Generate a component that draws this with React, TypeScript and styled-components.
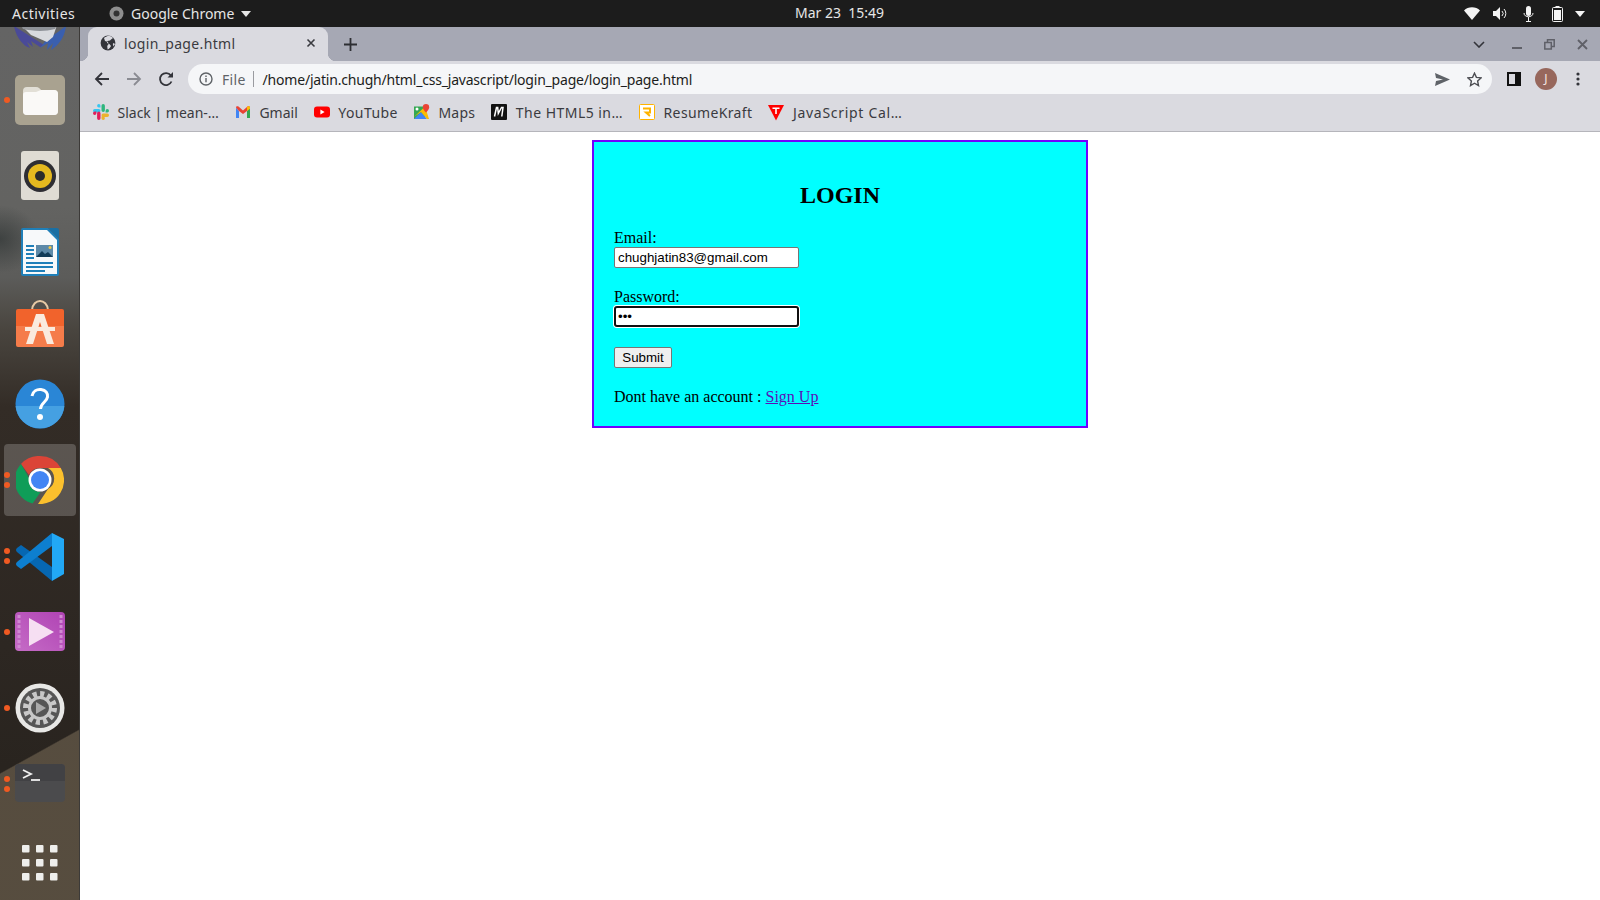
import React from 'react';
import styled, { createGlobalStyle } from 'styled-components';

const Global = createGlobalStyle`
  html, body { margin: 0; padding: 0; width: 1600px; height: 900px; overflow: hidden; background: #fff; }
  * { box-sizing: border-box; }
`;
const UI = `"Noto Sans", "Open Sans", sans-serif`;

const Screen = styled.div`display:flex;flex-direction:column;width:1600px;height:900px;overflow:hidden;`;
const TopBar = styled.header`height:27px;flex:none;background:#1c1c1c;color:#e6e6e6;font-family:${UI};font-size:14px;display:grid;grid-template-columns:783px auto 1fr;align-items:center;padding:0 12px;`;
const TopLeft = styled.div`display:flex;align-items:center;`;
const Activities = styled.span`width:97px;letter-spacing:.5px;`;
const AppMenu = styled.span`display:flex;align-items:center;gap:7px;`;
const Clock = styled.time`font-size:14px;padding-bottom:2px;`;
const TopRight = styled.div`display:flex;align-items:center;justify-content:flex-end;padding-right:3px;`;
const Tray = styled.span<{ $gap: number }>`display:flex;margin-left:${p => p.$gap}px;`;
const Body = styled.div`flex:1;display:flex;min-height:0;`;
const Dock = styled.nav`
  width:80px;flex:none;overflow:hidden;display:flex;flex-direction:column;align-items:center;
  border-right:1px solid #3c3a38;
  background:
    linear-gradient(151deg, transparent 0 66.200%, rgba(88,78,64,.97) 66.500% 100%) 0 410px/80px 463px no-repeat,
    radial-gradient(40px 34px at 0 212px, rgba(40,46,46,.6), transparent),
    linear-gradient(180deg,#646464 0,#636361 180px,#5c5c5a 250px,#4a4640 300px,#332c26 380px,#2d2722 620px,#29241f 740px,#29241f 873px);
`;
const DockItem = styled.div<{ $active?: boolean }>`
  position:relative;flex:none;width:72px;height:72px;margin:2px 0;border-radius:4px;
  display:flex;align-items:center;justify-content:center;
  background:${p => (p.$active ? 'rgba(255,255,255,.2)' : 'transparent')};
  &:first-child{margin-top:-39px;}
  &:last-child{margin-top:5px;}
`;
const Pips = styled.span`position:absolute;left:0;top:50%;transform:translateY(-50%);display:flex;flex-direction:column;gap:4px;`;
const Pip = styled.i`display:block;width:6px;height:6px;border-radius:50%;background:#f05a22;`;

const Main = styled.main`flex:1;min-width:0;display:flex;flex-direction:column;`;
const TabStrip = styled.div`height:34px;flex:none;background:#a6a8b4;display:flex;align-items:stretch;padding-left:8px;`;
const Tab = styled.div`
  position:relative;width:240px;background:#dadae0;border-radius:9px 9px 0 0;display:flex;align-items:center;
  font-family:${UI};font-size:14px;letter-spacing:.34px;color:#3a3b40;padding:0 12px 2px 12px;gap:8px;
  &::before,&::after{content:"";position:absolute;bottom:0;width:8px;height:8px;}
  &::before{left:-8px;background:radial-gradient(circle at 0 0,transparent 8px,#dadae0 8.500px);}
  &::after{right:-8px;background:radial-gradient(circle at 100% 0,transparent 8px,#dadae0 8.500px);}
`;
const TabTitle = styled.span`flex:1;`;
const NewTab = styled.div`width:44px;display:flex;align-items:center;justify-content:center;`;
const StripRight = styled.div`margin-left:auto;display:flex;align-items:center;padding-right:2px;`;
const WinBtn = styled.div<{ $w: number }>`width:${p => p.$w}px;display:flex;align-items:center;justify-content:center;`;
const ToolBar = styled.div`height:36px;flex:none;background:#dadae0;display:flex;align-items:center;padding:0 6px 0 6px;`;
const ToolBtn = styled.div`width:32px;height:32px;flex:none;display:flex;align-items:center;justify-content:center;`;
const Omni = styled.div`flex:1;height:30px;margin:0 6px 0 6px;border-radius:15px;background:#f5f6f8;display:flex;align-items:center;padding:0 2px 0 11px;font-family:${UI};font-size:14px;color:#1c1d20;`;
const Scheme = styled.span`color:#5f6368;margin-left:9px;letter-spacing:.3px;`;
const Divider = styled.span`width:1px;height:16px;background:#9a9ba0;margin:0 9px 0 7px;`;
const Url = styled.span`flex:1;white-space:nowrap;letter-spacing:-.2px;`;
const Bookmarks = styled.div`height:35px;flex:none;background:#dadae0;border-bottom:1px solid #b5b5bb;display:flex;align-items:center;padding:0 0 4px 13px;gap:16px;font-family:${UI};font-size:14px;color:#3a3b40;`;
const Bookmark = styled.span<{ $track: number }>`display:flex;align-items:center;gap:8.500px;white-space:nowrap;letter-spacing:${p => p.$track}px;`;
const Page = styled.div`flex:1;background:#fff;padding-top:8px;font-family:"Liberation Serif",serif;font-size:16px;color:#000;`;
const Card = styled.form`width:496px;margin:0 auto;padding:20px;background:#0ff;border:2px solid #7000ff;`;
const Title = styled.h2`font-size:24px;font-weight:700;text-align:center;margin:20px 0;`;
const Field = styled.label`display:block;margin-bottom:20px;`;
const FieldName = styled.span`display:block;line-height:18px;`;
const Input = styled.input<{ $focus?: boolean }>`
  display:block;width:185px;height:21px;margin:0;padding:1px 3px;font:13.33px "Liberation Sans",sans-serif;color:#000;background:#fff;
  border:1px solid #767676;border-radius:2px;
  ${p => (p.$focus ? 'border:0;outline:none;box-shadow:0 0 0 1px #fff, inset 0 0 0 2px #101010;padding:1px 4px;border-radius:3px;' : '')}
`;
const Submit = styled.button`display:block;height:21px;width:58px;padding:0;font:13.33px "Liberation Sans",sans-serif;color:#000;background:#efefef;border:1px solid #767676;border-radius:2px;`;
const Footnote = styled.p`margin:20px 0 0;line-height:18px;`;
const SignUp = styled.a`color:#5a10b8;text-decoration:underline;`;

const Globe = () => (
  <svg width="16" height="16" viewBox="0 0 16 16"><circle cx="8" cy="8" r="7.400" fill="#33343a" /><path d="M8 .8c-1 1-3 1-4 2.200l1 3 3 1 .6 2-1.400 2 .4 3.600C9 14 10 13 11 11l-1.600-2-2.400-1 .4-2 2.600-.4L11 4.400 13 3C11.500 1.500 10 1 8 .8zM13.500 8l1.500 1-1.500 2.500L12.800 9z" fill="#dadae0" /></svg>
);
const Thunderbird = () => (
  <svg width="54" height="54" viewBox="0 0 54 54">
    <path d="M1 29c2 11 9 20 16 22l-3-6 6 5-2-6 9 6 4-2z" fill="#4a4a98" />
    <path d="M53 29c-1 11-8 20-15 24l2-7-6 7 1-7-8 5 6-8 12-8z" fill="#3a5fae" />
    <path d="M8 28c10 2 26 2 36 0l-4 12-6 5-16-7z" fill="#d8dade" />
    <path d="M8 28c10 2 26 2 36 0l-2 4c-10 3-24 2-32 0z" fill="#8e9298" />
  </svg>
);
const FilesIcon = () => (
  <svg width="50" height="50" viewBox="0 0 50 50"><rect width="50" height="50" rx="5" fill="#a9a290" /><path d="M8 16a4 4 0 0 1 4-4h9c3 0 4 2 5 3h13a4 4 0 0 1 4 4v17a4 4 0 0 1-4 4H12a4 4 0 0 1-4-4z" fill="#e2dfd6" /><path d="M8 20a3 3 0 0 1 3-3h10l5-2h13a4 4 0 0 1 4 4v17a4 4 0 0 1-4 4H12a4 4 0 0 1-4-4z" fill="#faf9f7" /></svg>
);
const RhythmIcon = () => (
  <svg width="50" height="50" viewBox="0 0 50 50"><rect x="6" y="0" width="38" height="49" rx="3" fill="#dfdcd4" /><circle cx="25" cy="25" r="16" fill="#2e2e33" /><circle cx="25" cy="25" r="12" fill="#e5b91f" /><circle cx="25" cy="25" r="5" fill="#2b2b2b" /></svg>
);
const WriterIcon = () => (
  <svg width="50" height="50" viewBox="0 0 50 50"><path d="M6 3a2 2 0 0 1 2-2h25l11 11v35a2 2 0 0 1-2 2H8a2 2 0 0 1-2-2z" fill="#1f7fb8" /><path d="M8 3h24l10 10v34H8z" fill="#f7f9fa" /><path d="M33 1h9a2 2 0 0 1 2 2v9z" fill="#1a6fa3" /><path d="M11 18h8v2h-8zM11 22h8v2h-8zM11 26h8v2h-8zM11 30h8v2h-8zM11 35h27v2H11zM11 39h27v2H11zM11 43h19v2H11z" fill="#1f7fb8" /><rect x="21" y="18" width="17" height="12" fill="#5d8aa8" /><path d="M21 30l6-6 3 3 3-2 5 5z" fill="#123c58" /><circle cx="35" cy="20.500" r="1.500" fill="#f1c644" /></svg>
);
const StoreIcon = () => (
  <svg width="50" height="56" viewBox="0 0 50 56"><path d="M17 10c1-12 15-12 16 0" fill="none" stroke="#e6c9a4" strokeWidth="2" /><path d="M1 11a2 2 0 0 1 2-2h44a2 2 0 0 1 2 2v15H1z" fill="#f1632c" /><path d="M1 26h48v19a2 2 0 0 1-2 2H3a2 2 0 0 1-2-2z" fill="#f57c4a" /><path d="M21 14h8l10 30h-7l-7-22-7 22h-7z" fill="#faeadd" /><path d="M10 27h30v4H10z" fill="#faeadd" /></svg>
);
const HelpIcon = () => (
  <svg width="50" height="50" viewBox="0 0 50 50"><circle cx="25" cy="25" r="24.500" fill="#2a86d6" /><path d="M.6 27h48.800a24.500 24.500 0 0 1-48.800 0z" fill="#45a0e2" /><path d="M17 17c1-5 5-7 9-6.500 5 .6 7 4 6.500 7.500-.7 5-7 6-7 12" fill="none" stroke="#fff" strokeWidth="3" /><circle cx="25" cy="38" r="3" fill="#fff" /></svg>
);
const ChromeIcon = () => (
  <svg width="48" height="48" viewBox="0 0 48 48">
    <path d="M24 0a24 24 0 0 1 20.800 12H24a12 12 0 0 0-11 7L5 8A24 24 0 0 1 24 0z" fill="#db4437" />
    <path d="M5 8l8.600 15a11 11 0 0 0 11 13l-8 11.500A24 24 0 0 1 5 8z" fill="#0f9d58" />
    <path d="M44.800 12A24 24 0 0 1 22 48l10-15a12 12 0 0 0 0-21z" fill="#fbc02d" />
    <circle cx="24" cy="24" r="11.500" fill="#fff" /><circle cx="24" cy="24" r="9" fill="#4285f4" />
  </svg>
);
const CodeIcon = () => (
  <svg width="48" height="49" viewBox="0 0 48 49">
    <path d="M36 49L1 20q-2-2 0-4l4-3 31 22z" fill="#0667b2" />
    <path d="M36 1L1 30q-2 2 0 4l4 3 31-23z" fill="#0d7fd0" />
    <path d="M36 1l12 6v35l-12 7z" fill="#22a8f5" />
  </svg>
);
const VideoIcon = () => (
  <svg width="50" height="40" viewBox="0 0 50 40">
    <defs><linearGradient id="vid" x1="0" y1="1" x2="1" y2="0"><stop offset="0" stopColor="#c56cc6" /><stop offset="1" stopColor="#b043b4" /></linearGradient></defs>
    <rect width="50" height="39" rx="4" fill="url(#vid)" />
    <path d="M4 3v33M46 3v33" stroke="#d08ad2" strokeWidth="3" strokeDasharray="3 2" />
    <path d="M14 6v28l25-14z" fill="#f6dff2" />
  </svg>
);
const SettingsIcon = () => (
  <svg width="50" height="50" viewBox="0 0 50 50"><circle cx="25" cy="25" r="24.500" fill="#e8e8e6" /><circle cx="25" cy="25" r="20" fill="#565656" /><circle cx="25" cy="25" r="14" fill="none" stroke="#c8c8c8" strokeWidth="6" strokeDasharray="4 3.300" /><circle cx="25" cy="25" r="10.500" fill="none" stroke="#c8c8c8" strokeWidth="3" /><path d="M21 19v12l10-6z" fill="#aaa" /></svg>
);
const TerminalIcon = () => (
  <svg width="50" height="40" viewBox="0 0 50 40"><rect width="50" height="38" rx="4" fill="#4b4b4d" /><path d="M4 0h42a4 4 0 0 1 4 4v13H0V4a4 4 0 0 1 4-4z" fill="#414144" /><path d="M8 6l8 4-8 4" fill="none" stroke="#f0f0f0" strokeWidth="1.800" /><path d="M16 16h9" stroke="#f0f0f0" strokeWidth="1.800" /></svg>
);
const GridIcon = () => (
  <svg width="36" height="36" viewBox="0 0 36 36" fill="#eeeeec">
    {[0, 14, 28].flatMap(y => [0, 14, 28].map(x => <rect key={`${x}-${y}`} x={x} y={y} width="7.500" height="7.500" rx="1" />))}
  </svg>
);

const SlackIcon = () => (
  <svg width="16" height="16" viewBox="0 0 16 16"><path d="M5.800 0a1.700 1.700 0 0 0 0 3.400h1.700V1.700A1.700 1.700 0 0 0 5.800 0zM1.700 5a1.700 1.700 0 0 0 0 3.400h4.100a1.700 1.700 0 0 0 0-3.400z" fill="#36c5f0" /><path d="M16 6.700a1.700 1.700 0 0 0-3.400 0v1.700h1.700A1.700 1.700 0 0 0 16 6.700zM10.200 0a1.700 1.700 0 0 0-1.700 1.700v4.600a1.700 1.700 0 0 0 3.400 0V1.700A1.700 1.700 0 0 0 10.200 0z" fill="#2eb67d" /><path d="M10.200 16a1.700 1.700 0 0 0 0-3.400H8.500v1.700a1.700 1.700 0 0 0 1.700 1.700zM14.300 9.600h-4.100a1.700 1.700 0 0 0 0 3.400h4.100a1.700 1.700 0 0 0 0-3.400z" fill="#ecb22e" /><path d="M0 9.300a1.700 1.700 0 0 0 3.400 0V7.600H1.700A1.700 1.700 0 0 0 0 9.300zM5.800 7.600a1.700 1.700 0 0 0-1.700 1.700v5a1.700 1.700 0 0 0 3.400 0v-5a1.700 1.700 0 0 0-1.700-1.700z" fill="#e01e5a" /></svg>
);
const GmailIcon = () => (
  <svg width="16" height="16" viewBox="0 0 16 16"><path d="M1 3.500V14h3V7z" fill="#4285f4" /><path d="M15 3.500V14h-3V7z" fill="#34a853" /><path d="M1 3.500C1 2 2.500 1.800 3.500 2.600L8 6.500l4.500-3.900c1-.8 2.500-.6 2.500.9L12 7 8 10 4 7z" fill="#ea4335" /><path d="M15 3.500c0-1.500-1.500-1.700-2.500-.9L12 3v4l3-2.300z" fill="#fbbc04" /></svg>
);
const YouTubeIcon = () => (
  <svg width="16" height="16" viewBox="0 0 16 16"><rect y="2.500" width="16" height="11" rx="3" fill="#f00" /><path d="M6.400 5.500v5L10.600 8z" fill="#fff" /></svg>
);
const MapsIcon = () => (
  <svg width="16" height="16" viewBox="0 0 16 16"><path d="M0 2.500h11v12.500H0z" fill="#34a853" /><path d="M0 15l7-7 6 7z" fill="#4285f4" /><path d="M0 13L11 2.500 15 15h-2L7 8z" fill="#fbbc04" /><circle cx="3" cy="5" r="1.500" fill="#fff" /><path d="M12 0a3.200 3.200 0 0 1 3.200 3.200C15.200 5.500 12 8.500 12 8.500S8.800 5.500 8.800 3.200A3.200 3.200 0 0 1 12 0z" fill="#ea4335" /></svg>
);
const HtmlIcon = () => (
  <svg width="16" height="16" viewBox="0 0 16 16"><rect width="16" height="16" rx="1" fill="#111" /><path d="M3.500 12.500L5.500 3.500h1.200l.6 6 3.200-6h1.500l-1.200 9" fill="none" stroke="#fff" strokeWidth="1.500" /></svg>
);
const ResumeIcon = () => (
  <svg width="16" height="16" viewBox="0 0 16 16"><rect x=".5" y=".5" width="15" height="15" rx="1" fill="#fff" stroke="#ffb300" /><path d="M4 4.500h7v4H7l4 3.500" fill="none" stroke="#ffb300" strokeWidth="2" /></svg>
);
const JsCalIcon = () => (
  <svg width="16" height="17" viewBox="0 0 16 17"><path d="M0 1h16L8 16.500z" fill="#f00" /><path d="M4.500 3.500h7v1.600H8.800V10H7.200V5.100H4.500z" fill="#fff" /></svg>
);

const dock: { icon: React.ReactNode; pips?: number; active?: boolean }[] = [
  { icon: <Thunderbird /> },
  { icon: <FilesIcon />, pips: 1 },
  { icon: <RhythmIcon /> },
  { icon: <WriterIcon /> },
  { icon: <StoreIcon /> },
  { icon: <HelpIcon /> },
  { icon: <ChromeIcon />, pips: 2, active: true },
  { icon: <CodeIcon />, pips: 2 },
  { icon: <VideoIcon />, pips: 1 },
  { icon: <SettingsIcon />, pips: 1 },
  { icon: <TerminalIcon />, pips: 2 },
  { icon: <GridIcon /> },
];
const marks: [React.ReactNode, string, number][] = [
  [<SlackIcon />, 'Slack | mean-…', 0],
  [<GmailIcon />, 'Gmail', 0],
  [<YouTubeIcon />, 'YouTube', 0.43],
  [<MapsIcon />, 'Maps', 0.25],
  [<HtmlIcon />, 'The HTML5 in…', 0.47],
  [<ResumeIcon />, 'ResumeKraft', 0.37],
  [<JsCalIcon />, 'JavaScript Cal…', 0.7],
];

export default function App() {
  return (
    <Screen>
      <Global />
      <TopBar>
        <TopLeft>
          <Activities>Activities</Activities>
          <AppMenu>
            <svg width="15" height="15" viewBox="0 0 15 15"><circle cx="7.500" cy="7.500" r="7" fill="#8d8d8d" /><circle cx="7.500" cy="7.500" r="3" fill="#333" /></svg>
            Google Chrome
            <svg width="10" height="6" viewBox="0 0 10 6"><path d="M0 0h10L5 6z" fill="#e6e6e6" /></svg>
          </AppMenu>
        </TopLeft>
        <Clock>Mar 23&nbsp;&nbsp;15:49</Clock>
        <TopRight>
          <Tray $gap={0}><svg width="16" height="13" viewBox="0 0 16 13"><path d="M0 3.500C4-.8 12-.8 16 3.500L8 13z" fill="#f4f4f4" /></svg></Tray>
          <Tray $gap={13}><svg width="15" height="13" viewBox="0 0 15 13"><path d="M0 4h3l4-4v13L3 9H0z" fill="#f4f4f4" /><path d="M9 4a3.500 3.500 0 0 1 0 5M11 2a6.500 6.500 0 0 1 0 9" fill="none" stroke="#f4f4f4" /></svg></Tray>
          <Tray $gap={15}><svg width="11" height="16" viewBox="0 0 11 16"><rect x="3" width="5" height="10" rx="2.500" fill="#f4f4f4" /><path d="M1 7c0 5 9 5 9 0M5.500 11v4M3 15.500h5" fill="none" stroke="#f4f4f4" /></svg></Tray>
          <Tray $gap={18}><svg width="11" height="16" viewBox="0 0 11 16"><rect x=".5" y="1.500" width="10" height="14" rx="1" fill="none" stroke="#f4f4f4" /><rect x="3.500" width="4" height="2" fill="#f4f4f4" /><rect x="2" y="4" width="7" height="10" fill="#f4f4f4" /></svg></Tray>
          <Tray $gap={12}><svg width="10" height="6" viewBox="0 0 10 6"><path d="M0 0h10L5 6z" fill="#f4f4f4" /></svg></Tray>
        </TopRight>
      </TopBar>
      <Body>
        <Dock>
          {dock.map((d, i) => (
            <DockItem key={i} $active={d.active}>
              {d.pips ? <Pips>{Array.from({ length: d.pips }, (_, k) => <Pip key={k} />)}</Pips> : null}
              {d.icon}
            </DockItem>
          ))}
        </Dock>
        <Main>
          <TabStrip>
            <Tab>
              <Globe />
              <TabTitle>login_page.html</TabTitle>
              <svg width="10" height="10" viewBox="0 0 10 10"><path d="M1.500 1.500l7 7M8.500 1.500l-7 7" stroke="#3a3b40" strokeWidth="1.600" /></svg>
            </Tab>
            <NewTab>
              <svg width="13" height="13" viewBox="0 0 13 13"><path d="M6.500 0v13M0 6.500h13" stroke="#2d2e33" strokeWidth="1.800" /></svg>
            </NewTab>
            <StripRight>
              <WinBtn $w={42}><svg width="12" height="7" viewBox="0 0 12 7"><path d="M1 1l5 5 5-5" fill="none" stroke="#33343a" strokeWidth="1.600" /></svg></WinBtn>
              <WinBtn $w={33}><svg width="10" height="10" viewBox="0 0 10 10"><path d="M0 9h10" stroke="#5f6068" strokeWidth="2" /></svg></WinBtn>
              <WinBtn $w={33}><svg width="11" height="11" viewBox="0 0 11 11"><path d="M3.500 3V.8h6.700v6.700H8" fill="none" stroke="#5f6068" strokeWidth="1.500" /><rect x=".8" y="3.500" width="6.500" height="6.500" fill="none" stroke="#5f6068" strokeWidth="1.500" /></svg></WinBtn>
              <WinBtn $w={32}><svg width="11" height="11" viewBox="0 0 11 11"><path d="M1 1l9 9M10 1l-9 9" stroke="#5f6068" strokeWidth="1.800" /></svg></WinBtn>
            </StripRight>
          </TabStrip>
          <ToolBar>
            <ToolBtn><svg width="16" height="16" viewBox="0 0 16 16"><path d="M15 8H2M8 2L2 8l6 6" fill="none" stroke="#33343a" strokeWidth="1.800" /></svg></ToolBtn>
            <ToolBtn><svg width="16" height="16" viewBox="0 0 16 16"><path d="M1 8h13M8 2l6 6-6 6" fill="none" stroke="#8a8b92" strokeWidth="1.800" /></svg></ToolBtn>
            <ToolBtn><svg width="16" height="16" viewBox="0 0 16 16"><path d="M13.500 10.500A6 6 0 1 1 12.800 4.400" fill="none" stroke="#33343a" strokeWidth="1.800" /><path d="M9.500 6.500H15V1z" fill="#33343a" /></svg></ToolBtn>
            <Omni>
              <svg width="14" height="14" viewBox="0 0 14 14"><circle cx="7" cy="7" r="6" fill="none" stroke="#5f6368" strokeWidth="1.400" /><path d="M7 6v4.200M7 3.500v1.400" stroke="#5f6368" strokeWidth="1.400" /></svg>
              <Scheme>File</Scheme>
              <Divider />
              <Url>/home/jatin.chugh/html_css_javascript/login_page/login_page.html</Url>
              <ToolBtn><svg width="15" height="13" viewBox="0 0 15 13"><path d="M0 0l15 6.500L0 13l1-5 7-1.500L1 5z" fill="#5f6368" /></svg></ToolBtn>
              <ToolBtn><svg width="15" height="15" viewBox="0 0 15 15"><path d="M7.500 1.200l1.900 4.200 4.600.5-3.400 3.100.9 4.500-4-2.300-4 2.300.9-4.500L1 5.900l4.600-.5z" fill="none" stroke="#4c4d52" strokeWidth="1.400" /></svg></ToolBtn>
            </Omni>
            <ToolBtn><svg width="14" height="14" viewBox="0 0 14 14"><rect x="1" y="1" width="12" height="12" fill="none" stroke="#111" strokeWidth="2" /><rect x="8" y="1" width="5" height="12" fill="#111" /></svg></ToolBtn>
            <ToolBtn><svg width="22" height="22" viewBox="0 0 22 22"><circle cx="11" cy="11" r="11" fill="#97675c" /><text x="11" y="15" textAnchor="middle" fontFamily="Noto Sans, sans-serif" fontSize="12" fill="#f5e6e2">J</text></svg></ToolBtn>
            <ToolBtn><svg width="4" height="14" viewBox="0 0 4 14" fill="#33343a"><circle cx="2" cy="2" r="1.600" /><circle cx="2" cy="7" r="1.600" /><circle cx="2" cy="12" r="1.600" /></svg></ToolBtn>
          </ToolBar>
          <Bookmarks>
            {marks.map(([icon, label, track]) => <Bookmark key={label} $track={track}>{icon}{label}</Bookmark>)}
          </Bookmarks>
          <Page>
            <Card onSubmit={e => e.preventDefault()}>
              <Title>LOGIN</Title>
              <Field><FieldName>Email:</FieldName><Input type="text" readOnly value="chughjatin83@gmail.com" /></Field>
              <Field><FieldName>Password:</FieldName><Input $focus type="password" readOnly value="abc" /></Field>
              <Submit type="button">Submit</Submit>
              <Footnote>Dont have an account : <SignUp href="#">Sign Up</SignUp></Footnote>
            </Card>
          </Page>
        </Main>
      </Body>
    </Screen>
  );
}
